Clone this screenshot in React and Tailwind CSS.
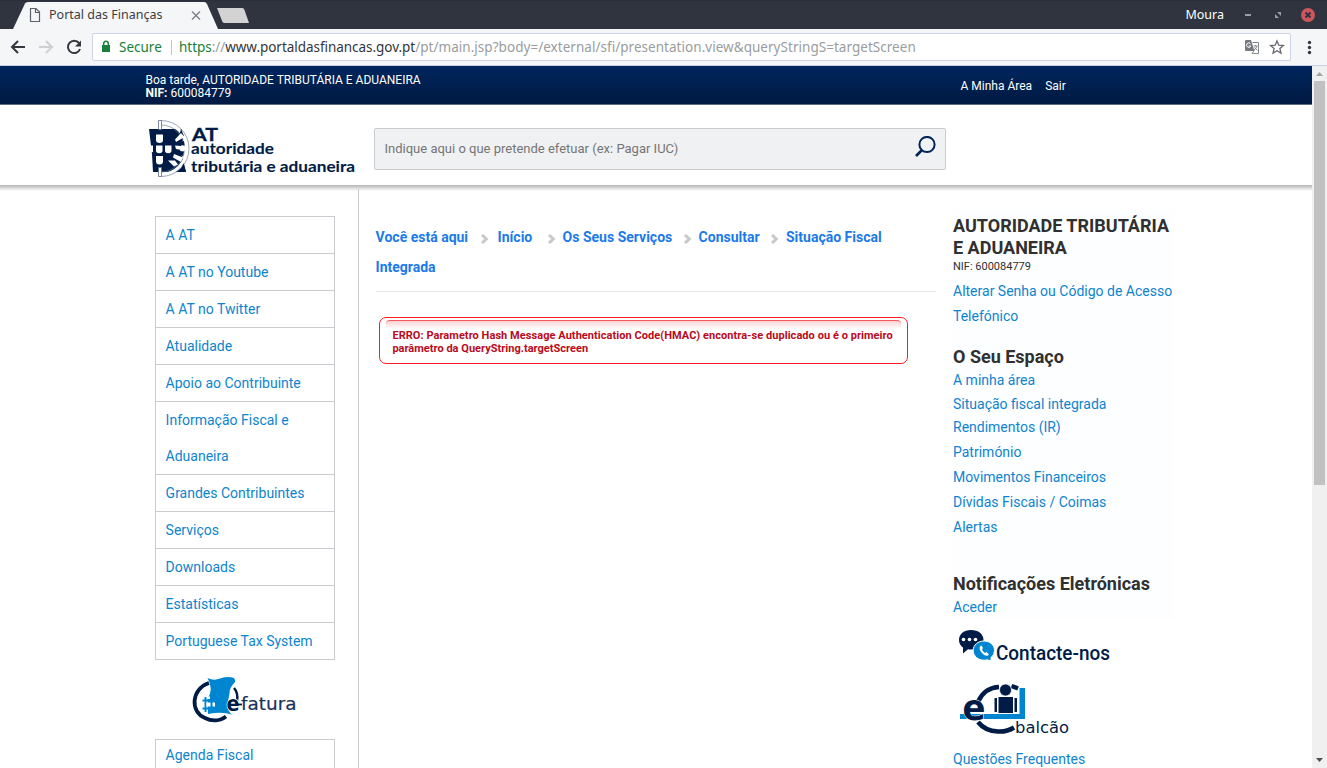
import React from "react";

const SIDE_LINKS = [
  "A AT",
  "A AT no Youtube",
  "A AT no Twitter",
  "Atualidade",
  "Apoio ao Contribuinte",
  "Informação Fiscal e Aduaneira",
  "Grandes Contribuintes",
  "Serviços",
  "Downloads",
  "Estatísticas",
  "Portuguese Tax System",
];

function TabStrip() {
  return (
    <div className="relative flex h-[29px] shrink-0 items-start border-t border-[#2b2e3b] bg-[#2f343f]">
      <svg className="absolute left-0 top-0" width="260" height="28" viewBox="0 1 260 28">
        <path d="M13 29 L25 3.5 Q26 2 28 2 H204 Q206 2 207 4 L218 29 Z" fill="#f5f6f7" />
        <path d="M217 8 H242 Q244 8 244.500 10 L249 23 H225 Q223 23 222.500 22 Z" fill="#d3d3d4" />
        <path d="M30.500 8.500 H36 L39.500 12 V21.500 H30.500 Z M35.500 8.500 V12.500 H39.500" fill="none" stroke="#5c616c" strokeWidth="1.200" />
        <path d="M192 11.500 l8 8 M200 11.500 l-8 8" stroke="#7c818c" strokeWidth="1.400" />
      </svg>
      <span className="relative ml-[49px] mt-[5px] h-[18px] w-[120px] whitespace-nowrap font-['Noto_Sans',sans-serif] text-[12.5px] leading-[18px] text-[#3b3e45]">
        Portal das Finanças
      </span>
      <span className="ml-auto mt-[5px] whitespace-nowrap font-['Noto_Sans',sans-serif] text-[12.5px] leading-[18px] text-white">
        Moura
      </span>
      <svg width="103" height="28" viewBox="1224 1 103 28" className="shrink-0">
        <rect x="1245" y="14" width="6" height="2" fill="#9a9da5" />
        <path d="M1277 12 h4 v4 z M1275 14 v4 h4 z" fill="#9a9da5" />
        <circle cx="1308" cy="15" r="7" fill="#cc575d" />
        <path d="M1305.500 12.500 l5 5 M1310.500 12.500 l-5 5" stroke="#2f343f" strokeWidth="2" />
      </svg>
    </div>
  );
}

function Toolbar() {
  return (
    <div className="flex h-[37px] shrink-0 items-start border-b border-[#ccd0e4] bg-[#f5f6f7] pt-1 font-['Noto_Sans',sans-serif]">
      <svg width="92" height="28" viewBox="0 33 92 28" fill="none" className="shrink-0">
        <path d="M25 47 H12.500 M18 41 L12 47 L18 53" stroke="#34373f" strokeWidth="2" />
        <path d="M39 47 H51.500 M46 41 L52 47 L46 53" stroke="#cfd0d2" strokeWidth="2" />
        <path d="M79 43 A6.200 6.200 0 1 0 80 49" stroke="#34373f" strokeWidth="2" />
        <path d="M81 40.500 V46.500 H75 Z" fill="#34373f" />
      </svg>
      <div className="flex h-7 w-[1199px] shrink-0 items-center rounded-[2px] border border-[#ced2e6] bg-white text-[13.5px] leading-[26px]">
        <svg width="26" height="26" viewBox="93 34 26 26" className="shrink-0">
          <rect x="102" y="45" width="8" height="7" fill="#188038" />
          <path d="M103.700 45.500 V43.500 a2.300 2.300 0 0 1 4.600 0 V45.500" fill="none" stroke="#188038" strokeWidth="1.400" />
        </svg>
        <span className="w-[52px] whitespace-nowrap text-[#188038]">Secure</span>
        <span className="mr-[7px] h-[15px] w-px bg-[#c5c5c5]" />
        <span className="whitespace-nowrap text-[#9a9da0]">
          <span className="tracking-[-0.04px]">
            <span className="text-[#188038]">https</span>://<span className="text-[#33363c]">www.portaldasfinancas.gov.pt</span>
          </span>
          <span className="tracking-[0.035px]">/pt/main.jsp?body=/external/sfi/presentation.view&amp;queryStringS=targetScreen</span>
        </span>
        <svg width="52" height="26" viewBox="1238 34 52 26" className="ml-auto shrink-0">
          <path d="M1245 41 q0 -1 1 -1 h5 l3.500 11 h-8.500 q-1 0 -1 -1 z" fill="#777a80" />
          <path d="M1250.500 43.800 a2.200 2.200 0 1 0 .3 2.200 h-2" fill="none" stroke="#fff" strokeWidth="1" />
          <path d="M1252.500 42.500 h6 v11 h-6.500 l2 -2.500 M1253.500 46 h4 M1255.500 45 v1 M1257 46 q-1 3 -3 4 M1254.500 47.500 l3 3" fill="none" stroke="#85888d" strokeWidth="1" />
          <path d="M1277 41 l1.800 4.200 l4.600 .4 l-3.500 3 l1.100 4.500 l-4 -2.400 l-4 2.400 l1.100 -4.500 l-3.500 -3 l4.600 -.4 z" fill="none" stroke="#66696f" strokeWidth="1.300" />
        </svg>
      </div>
      <svg width="36" height="28" viewBox="1291 33 36 28" className="shrink-0">
        <g fill="#34373f">
          <circle cx="1309.500" cy="42.500" r="1.700" />
          <circle cx="1309.500" cy="47.500" r="1.700" />
          <circle cx="1309.500" cy="52.500" r="1.700" />
        </g>
      </svg>
    </div>
  );
}

function AtLogo() {
  return (
    <svg width="220" height="64" viewBox="145 116 220 64" className="shrink-0">
      <path d="M149 129 H181.500 L183 140 L180 150 L183 160 L186 172 H153 L152 154 Z" fill="#001b45" />
      <path d="M161 122.500 A26 26 0 0 1 161 174.500" fill="none" stroke="#fff" strokeWidth="3.500" />
      <path d="M161 120.500 A28 28 0 0 1 161 176.500 M161 125 A23.500 23.500 0 0 1 161 172" fill="none" stroke="#71809a" strokeWidth="0.700" />
      <path d="M181 129 L184 136 L178 140 Z M180.500 142 L184 141 L184.500 145.500 L180 145 Z M180 151 L184 151.500 L183 156 L179 154.500 Z M180 172 L186 172 L183.500 163 Z" fill="#001b45" />
      <path d="M175 139.500 L181 133 L184.500 137 L176 142 Z M175 145.500 L187 146.500 L187 151 L176 149 Z M174 154 L183 157.500 L181 162 L173 157.500 Z M168 160.500 L175 160.500 L178 164.500 L174 166.500 Z" fill="#fff" />
      <g fill="#fff" stroke="#5c6c88" strokeWidth="0.800">
        <path d="M158.500 120.500 h3 v9 h-3 z M158.500 167.500 h3 v9 h-3 z" />
      </g>
      <g fill="#fff">
        <path d="M156 134.500 h7 v5.500 q0 3 -3.500 3 t-3.500 -3 z" />
        <path d="M156 145.500 h6.500 v5 q0 2.800 -3.250 2.800 t-3.250 -2.800 z" />
        <path d="M165 145.500 h6.500 v5 q0 2.800 -3.250 2.800 t-3.250 -2.800 z" />
        <path d="M149 145.500 h4 v6.500 q-4 1 -4 -2.500 z" />
        <path d="M156 156 h7 v5.500 q0 3 -3.500 3 t-3.500 -3 z" />
      </g>
      <g fill="#001b45" stroke="#001b45" fontFamily="Lato, sans-serif" fontWeight="700">
        <text x="192" y="140.500" fontSize="16.500" strokeWidth="0.300" textLength="26" lengthAdjust="spacingAndGlyphs">AT</text>
        <text x="191" y="154" fontSize="15.500" strokeWidth="0.100" textLength="83" lengthAdjust="spacingAndGlyphs">autoridade</text>
        <text x="191" y="171.500" fontSize="15.500" strokeWidth="0.100" textLength="164" lengthAdjust="spacingAndGlyphs">tributária e aduaneira</text>
      </g>
    </svg>
  );
}

function EFaturaLogo() {
  return (
    <svg width="110" height="50" viewBox="190 675 110 50">
      <path d="M209 683 C191 689 190 712 205 718 C212 721.500 220 721 226 716.500" fill="none" stroke="#001b45" strokeWidth="3.800" />
      <path d="M234 688 Q238.500 693 237 701" fill="none" stroke="#001b45" strokeWidth="2.500" />
      <path d="M207.500 678 Q214 681 220 678.500 Q228 676 234 678 Q235.500 680 235 682 Q229 688 229.500 694 Q228 700 227.500 705 Q228 712 232 714.500 Q222 711.500 208 714 L207.500 699 Q214 689 207.500 678 Z" fill="#0086d1" />
      <path d="M205.500 697 v15 M202.500 700.500 h6 M202.500 708.500 h6" stroke="#0086d1" strokeWidth="2" fill="none" />
      <path d="M206.500 702.500 h4 v4 h-4 z M212.500 702.500 h2.500 v4 h-2.500 z M207.500 696.500 h2.500 v2.500 h-2.500 z" fill="#fff" />
      <text x="226.500" y="710.500" fontFamily="DejaVu Sans" fontWeight="700" fontSize="21.500" fill="#001b45" stroke="#fff" strokeWidth="1.500" paintOrder="stroke" textLength="13" lengthAdjust="spacingAndGlyphs">e</text>
      <path d="M238 704.500 h4" stroke="#001b45" strokeWidth="1.800" />
      <text x="241" y="710" fontFamily="DejaVu Sans" fontSize="18.500" fill="#1b315a" stroke="#1b315a" strokeWidth="0.200" textLength="55.500" lengthAdjust="spacingAndGlyphs">fatura</text>
    </svg>
  );
}

function ContactLogo() {
  return (
    <svg width="180" height="50" viewBox="953 619 180 50" className="block shrink-0">
      <path d="M971 630 C978.500 630 983.500 634 983.500 640 C983.500 646 978 649.500 971 649.500 Q969 649.500 968 649.200 L963 653.500 V647.500 Q959 645 959 640 C959 634 964 630 971 630 Z" fill="#001b45" />
      <g fill="#fff">
        <circle cx="963.500" cy="639.500" r="1.800" />
        <circle cx="969.500" cy="639.500" r="1.800" />
        <circle cx="975.500" cy="639.500" r="1.800" />
      </g>
      <path d="M984 641 C990 641 994.500 645 994.500 650.500 Q994.500 655 991 657.500 V661 L987.500 659.800 Q986 660.200 984 660.200 C978 660.200 973.200 656 973.200 650.500 C973.200 645 978 641 984 641 Z" fill="#0086d1" stroke="#fff" strokeWidth="1" />
      <path d="M980.500 646 C978.500 648 980 651 982.500 653.500 C985 656 987.500 656.500 989 654.500 L986.500 652 L985 653 Q983 651.500 982 649.500 L983 648 L981.500 645.500 Z" fill="#fff" />
      <text x="996" y="660" fontFamily="Roboto, sans-serif" fontWeight="500" fontSize="20" fill="#001b45" textLength="114" lengthAdjust="spacingAndGlyphs">Contacte-nos</text>
    </svg>
  );
}

function EBalcaoLogo() {
  return (
    <svg width="160" height="78" viewBox="953 669 160 78" className="block shrink-0">
      <path d="M978.500 701 Q985 687.500 999 687 M1011.500 686 L1018 688.500" fill="none" stroke="#001b45" strokeWidth="4.500" />
      <path d="M978 722 Q985 731 998 731.500 Q1007 732 1014 727.500" fill="none" stroke="#001b45" strokeWidth="4.500" />
      <path d="M960 714 h65 v5 h-65 z M1019.500 688 h5.500 v31 h-5.500 z" fill="#0086d1" />
      <circle cx="1005.500" cy="690" r="6" fill="#001b45" stroke="#fff" strokeWidth="0.700" />
      <path d="M998.500 697 h14.500 v16 h-14.500 z M994.500 698 h2.500 v14 h-2.500 z M1014.500 698 h2.500 v14 h-2.500 z" fill="#001b45" />
      <text x="962.500" y="719.500" fontFamily="DejaVu Sans" fontWeight="700" fontSize="35" fill="#001b45" stroke="#fff" strokeWidth="1" paintOrder="stroke" textLength="23" lengthAdjust="spacingAndGlyphs">e</text>
      <text x="1015" y="733" fontFamily="DejaVu Sans" fontSize="16.500" fill="#001b45" textLength="54" lengthAdjust="spacingAndGlyphs">balcão</text>
    </svg>
  );
}

function Chevron({ className }) {
  return (
    <svg width="9" height="10" viewBox="0 0 9 10" className={"mt-[3px] shrink-0 " + className}>
      <path d="M2 1 L6.300 5 L2 9" fill="none" stroke="#c9c9c9" strokeWidth="3" />
    </svg>
  );
}

function Sidebar() {
  return (
    <aside className="flex w-[180px] shrink-0 flex-col pt-[25px] text-[14px] leading-9 text-[#0d84cf]">
      <ul className="border border-[#c9cbce] [&>li+li]:border-t [&>li+li]:border-[#c9cbce]">
        {SIDE_LINKS.map((t) => (
          <li key={t} className="pl-[9.6px] pr-10 last:whitespace-nowrap last:pr-0 [&:nth-child(5)]:whitespace-nowrap [&:nth-child(7)]:whitespace-nowrap">
            {t}
          </li>
        ))}
      </ul>
      <div className="mt-[15px] h-[64px] shrink-0 pl-[35px]">
        <EFaturaLogo />
      </div>
      <div className="h-12 shrink-0 border border-[#c9cbce] pl-[9.6px] leading-[31px]">Agenda Fiscal</div>
    </aside>
  );
}

function Main() {
  return (
    <main className="ml-[23px] w-[579px] shrink-0 border-l border-[#c9cbce] pl-[17px] pr-px">
      <nav className="border-b border-[#e8e8e8] pb-[9px] text-[14px] font-bold leading-[30px] text-[#1b7aea]">
        <div className="-ml-[0.4px] flex items-center whitespace-nowrap">
          <span className="w-[92px]">Você está aqui</span>
          <Chevron className="ml-3" />
          <span className="ml-[9px] w-[35px]">Início</span>
          <Chevron className="ml-[14px]" />
          <span className="ml-[7px] w-[110px]">Os Seus Serviços</span>
          <Chevron className="ml-[10px]" />
          <span className="ml-[7px] w-[61px]">Consultar</span>
          <Chevron className="ml-[10px]" />
          <span className="ml-[7.4px]">Situação Fiscal</span>
        </div>
        <div className="-ml-[0.4px]">Integrada</div>
      </nav>
      <div className="ml-[3px] mt-[25px] h-[47px] w-[529px] rounded-[7px] border border-[#ff1a20] px-[6px] pt-[2px]">
        <div className="h-[9px] rounded-t-[4px] border-t border-[#f4585c] bg-linear-to-b from-[#fcd4d4] to-white" />
        <p className="ml-[6.4px] whitespace-nowrap text-[11px] font-bold leading-[13px] tracking-[0.055px] text-[#b90a20]">
          ERRO: Parametro Hash Message Authentication Code(HMAC) encontra-se duplicado ou é o primeiro
          <br />
          <span className="tracking-[0.02px]">parâmetro da QueryString.targetScreen</span>
        </p>
      </div>
    </main>
  );
}

function AccountPanel() {
  return (
    <aside className="ml-4 w-[221px] shrink-0 text-[14px] text-[#0d84cf]">
      <div className="mt-[19px] bg-[#fdfeff] pt-[5px]">
        <h2 className="whitespace-nowrap text-[18px] font-bold leading-[22px] text-[#303030]">
          AUTORIDADE TRIBUTÁRIA
          <br />E ADUANEIRA
        </h2>
        <div className="pt-px text-[11px] leading-[14px] text-[#303030]">NIF: 600084779</div>
        <div className="mt-[5px] whitespace-nowrap leading-[25px]">
          Alterar Senha ou Código de Acesso
          <br />
          Telefónico
        </div>
        <h2 className="mt-4 text-[18px] font-bold leading-6 text-[#303030]">O Seu Espaço</h2>
        <div className="leading-[23px]">A minha área</div>
        <div className="leading-6">Situação fiscal integrada</div>
        <div className="leading-[23px]">Rendimentos (IR)</div>
        <div className="pt-px leading-[25px]">
          <div>Património</div>
          <div>Movimentos Financeiros</div>
          <div>Dívidas Fiscais / Coimas</div>
          <div>Alertas</div>
        </div>
        <h2 className="mt-8 text-[18px] font-bold leading-6 text-[#303030]">Notificações Eletrónicas</h2>
        <div className="leading-[23px]">Aceder</div>
      </div>
      <ContactLogo />
      <EBalcaoLogo />
      <div className="leading-[25px]">Questões Frequentes</div>
    </aside>
  );
}

export default function App() {
  return (
    <div className="flex h-[768px] w-[1327px] flex-col overflow-hidden bg-white font-[Roboto,sans-serif]">
      <TabStrip />
      <Toolbar />
      <div className="flex h-[702px] shrink-0">
        <div className="flex w-[1312px] shrink-0 flex-col overflow-hidden">
          <div className="flex h-[39px] shrink-0 items-start border-b border-[#5d6b88] bg-linear-to-b from-[#00265e] to-[#001a42] text-[12px] leading-[13px] text-white">
            <div className="ml-[145.5px] mt-2 w-[815px]">
              <div>Boa tarde, AUTORIDADE TRIBUTÁRIA E ADUANEIRA</div>
              <div><b>NIF:</b> 600084779</div>
            </div>
            <span className="mt-[14px]">A Minha Área</span>
            <span className="ml-[13px] mt-[14px]">Sair</span>
          </div>
          <div className="flex h-20 shrink-0 items-start bg-white pl-[145px]">
            <div className="mt-[11px] w-[229px]"><AtLogo /></div>
            <div className="mt-[23px] flex h-[42px] w-[572px] items-center rounded-[2px] border border-[#c9cbce] bg-[#f0f1f3] pl-[9.5px] text-[13px] text-[#757575]">
              <span className="whitespace-nowrap">Indique aqui o que pretende efetuar (ex: Pagar IUC)</span>
              <svg width="24" height="26" viewBox="913 136 24 26" className="ml-auto mr-2" fill="none" stroke="#002457" strokeWidth="2">
                <circle cx="927" cy="144.500" r="7.600" />
                <path d="M922 150 L916 156" strokeWidth="2.600" />
              </svg>
            </div>
          </div>
          <div className="h-[6px] shrink-0 bg-linear-to-b from-[#b5b5b5] to-white" />
          <div className="flex min-h-0 flex-1 pl-[155px] [&>main]:-mt-[2px] [&>main]:pt-[33px]">
            <Sidebar />
            <Main />
            <AccountPanel />
          </div>
        </div>
        <div className="flex w-[15px] shrink-0 flex-col items-center bg-[#f0f0f0]">
          <svg width="15" height="15" viewBox="0 0 15 15"><path d="M7.500 6 L11 10 H4 Z" fill="#a3a3a3" /></svg>
          <div className="h-[404px] w-[11px] bg-[#c1c1c1]" />
          <svg width="15" height="15" viewBox="0 0 15 15" className="mt-auto"><path d="M4 5 H11 L7.500 9 Z" fill="#505050" /></svg>
        </div>
      </div>
    </div>
  );
}
